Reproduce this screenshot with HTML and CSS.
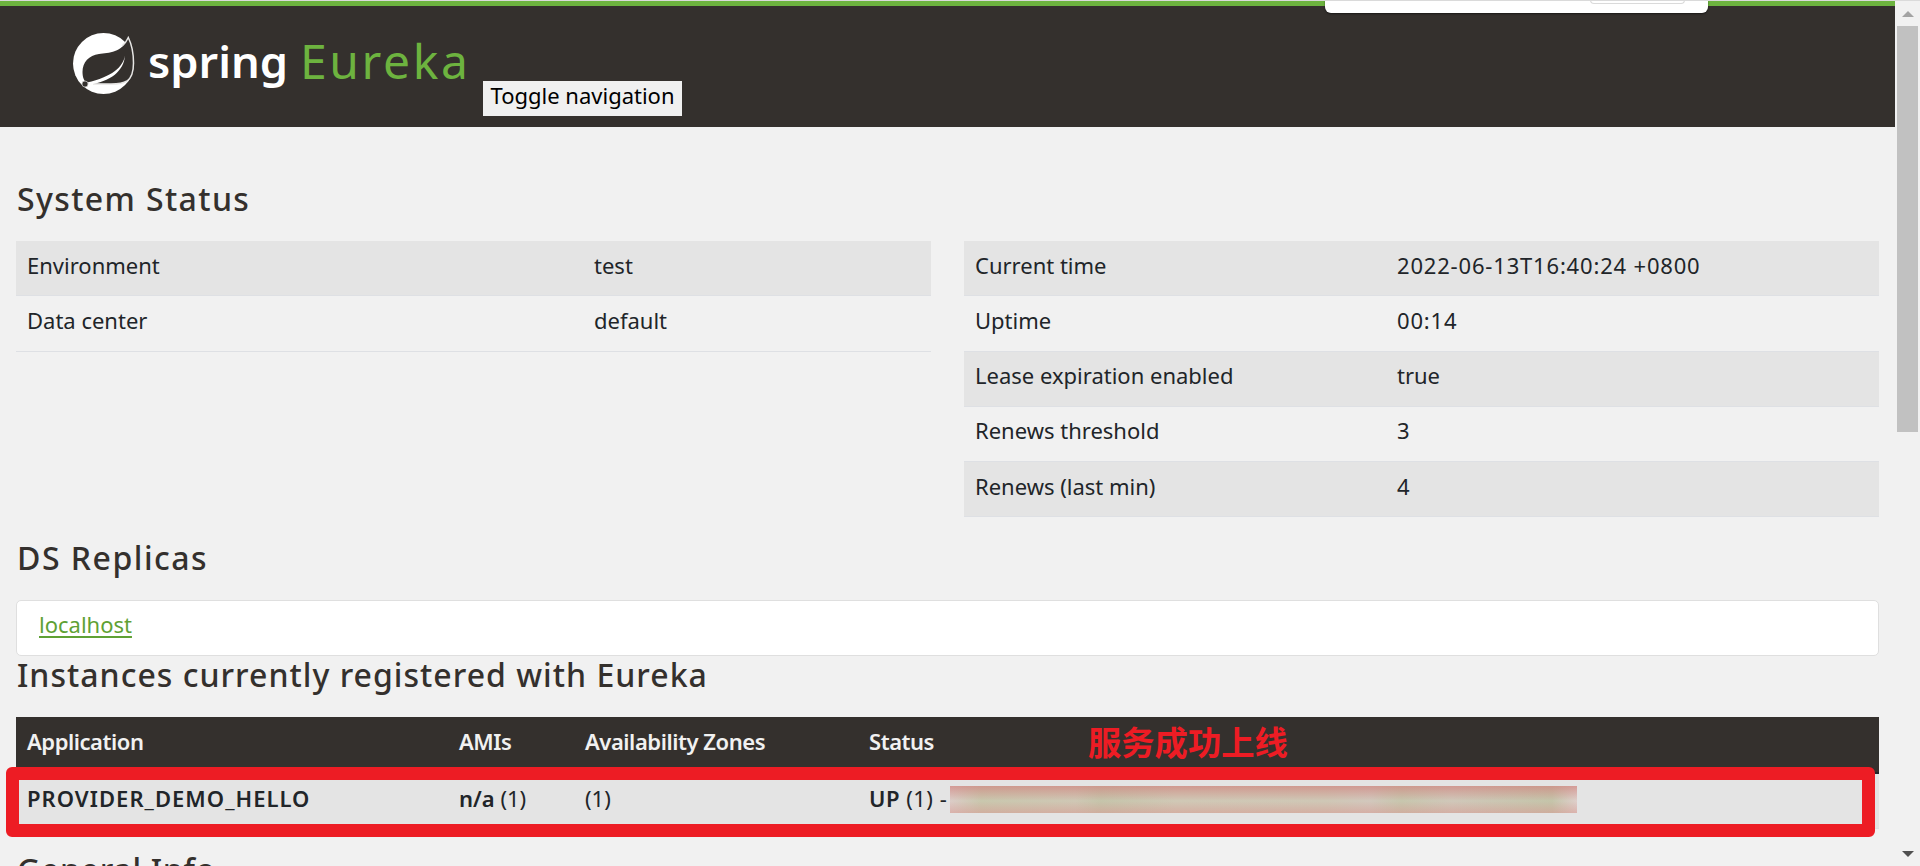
FILE: index.html
```html
<!DOCTYPE html>
<html lang="en">
<head>
<meta charset="utf-8">
<title>Eureka</title>
<link rel="stylesheet" href="styles.css">
</head>
<body>
<div class="window">
  <div class="page">
    <nav class="navbar">
      <svg class="logo" width="410" height="90" viewBox="0 -10 410 90" role="img" aria-label="spring Eureka">
        <circle cx="30.5" cy="30.5" r="30.5" fill="#fff"/>
        <path d="M55.3 4.5 C58.5 11 61 20 61 30 C61 38 59 45 54 48 C50 50.5 44 51 38 51 L15 50.5 C11 49 9.5 44 9.5 39 C9.5 29 16 22.5 26 21 C36 19.5 49 20 55.3 4.5Z" fill="#34302d"/>
        <path d="M49 13 C52 10.500 54 7.500 55.300 4.500 C58.500 11 60.500 20 60.500 30 C60.500 38 58.500 45 54 48 C50 50.500 44 51 38 51 L20 51" fill="none" stroke="#e6e5e4" stroke-width="1.500"/>
        <path d="M52 22.500 C50 34 39 44 14 49.500 L16 51.500 C37 49 51 38 52 22.500Z" fill="#fff"/>
        <circle cx="12" cy="51" r="3" fill="#34302d" stroke="#c4c3c2" stroke-width=".8"/>
        <text class="logo-spring" x="75" y="44.500" textLength="140" lengthAdjust="spacingAndGlyphs">spring</text>
        <text class="logo-eureka" x="227" y="45.500" textLength="168">Eureka</text>
      </svg>
      <button class="toggle" type="button">Toggle navigation</button>
    </nav>
    <main class="content">
      <h1 class="title title-status">System Status</h1>
      <div class="columns">
        <div class="table table-env">
          <div class="row odd"><span>Environment</span><span>test</span></div>
          <div class="row"><span>Data center</span><span>default</span></div>
        </div>
        <div class="table table-stats">
          <div class="row odd"><span>Current time</span><span class="digits">2022-06-13T16:40:24 +0800</span></div>
          <div class="row"><span>Uptime</span><span class="digits">00:14</span></div>
          <div class="row odd"><span>Lease expiration enabled</span><span>true</span></div>
          <div class="row"><span>Renews threshold</span><span>3</span></div>
          <div class="row odd"><span>Renews (last min)</span><span>4</span></div>
        </div>
      </div>
      <h1 class="title title-replicas">DS Replicas</h1>
      <div class="list"><a class="link" href="#">localhost</a></div>
      <h1 class="title title-instances">Instances currently registered with Eureka</h1>
      <div class="instances">
        <div class="irow head"><span>Application</span><span>AMIs</span><span>Availability Zones</span><span class="status">Status<b class="note">服务成功上线</b></span></div>
        <div class="irow body"><b class="app">PROVIDER_DEMO_HELLO</b><span><b>n/a</b> (1)</span><span>(1)</span><span class="status"><span class="up-count"><b>UP</b> (1) -</span><i class="smudge"></i></span></div>
        <div class="marker"></div>
      </div>
      <h1 class="title title-info">General Info</h1>
    </main>
  </div>
  <div class="scrollbar">
    <div class="arrow up"></div>
    <div class="thumb"></div>
    <div class="arrow down"></div>
  </div>
  <div class="popup"><div class="popup-button"></div></div>
</div>
</body>
</html>
```
FILE: styles.css
```css
* { box-sizing: border-box; }
body { margin: 0; overflow: hidden; background: #f1f1f1; }
.window {
  position: relative; display: grid; grid-template-columns: 1895px 25px;
  height: 866px; overflow: hidden; border-top: 1px solid #dadada;
  font: 22px/33px "Noto Sans", "Noto Sans CJK SC", sans-serif; color: #212529;
}
.page { height: 865px; overflow: hidden; }
.navbar {
  display: flex; height: 126px; padding: 17px 0 0 73px;
  background: #34302d; border-top: 5px solid #6db33f;
}
.logo { display: block; }
.logo-spring { font: 600 44px "Noto Sans", sans-serif; fill: #fff; }
.logo-eureka { font: 400 48px "Noto Sans", sans-serif; fill: #6db33f; }
.toggle {
  width: 199px; height: 35px; margin-top: 58px; padding: 0 0 6px; border: 0;
  background: #f0f0f0; color: #000; font: 22px/29px "Noto Sans", sans-serif; white-space: nowrap;
}
.content { padding: 0 16px; }
.title {
  margin: 0; padding-left: 1px; height: 40px; color: #34302d;
  font: 500 32px/40px "Noto Sans", sans-serif; white-space: nowrap;
}
.title-status { margin-top: 52px; letter-spacing: 1.38px; }
.columns { display: grid; grid-template-columns: 915px 915px; gap: 33px; margin-top: 22px; height: 277px; }
.row {
  display: grid; height: 55.25px; padding: 7.5px 11px 0; white-space: nowrap;
  border-bottom: 1px solid #dee0e4;
}
.odd { background: #e4e4e4; }
.digits { letter-spacing: .82px; }
.table-env .row { grid-template-columns: 567px 1fr; }
.table-stats .row { grid-template-columns: 422px 1fr; }
.title-replicas { margin-top: 20px; letter-spacing: 1.5px; }
.list {
  height: 56px; margin-top: 22px; padding: 7px 22px 0; background: #fff;
  border: 1px solid #dfdfdf; border-radius: 5px;
}
.link { color: #5fa134; text-underline-offset: 3px; text-decoration-thickness: 2px; }
.title-instances { margin-top: -1px; letter-spacing: 1.02px; }
.instances { position: relative; margin-top: 22px; font-size: 22px; }
.irow { display: grid; grid-template-columns: 432px 126px 284px 1fr; padding: 7.5px 11px 0; white-space: nowrap; }
.head { height: 57px; background: #34302d; color: #f1f1f1; font-weight: 600; letter-spacing: -.45px; border-bottom: 2px solid #212529; }
.body { height: 55px; background: #e4e4e4; border-bottom: 1px solid #dee0e4; }
.irow b { font-weight: 600; }
.irow .app { letter-spacing: 1.03px; }
.status { display: flex; }
.up-count { width: 78px; letter-spacing: .5px; }
.irow .note { margin-left: 154px; margin-top: -1px; font: 700 33.3px/33px "Noto Sans CJK SC", sans-serif; letter-spacing: 0; color: #ed1c24; }
.smudge {
  width: 627px; height: 27px; margin: 4.5px 0 0 3px;
  background:
    linear-gradient(180deg, rgba(208,128,124,.65), rgba(208,150,140,0) 55%, rgba(216,150,144,.5)),
    linear-gradient(90deg, #dccdc8, #c9c8ae 5%, #cfc8b5 20%, #c5c5ab 24%, #d0c9b6 36%, #cfc8b6 60%, #d2c8bd 67%, #c7c7ae 72%, #d0c8ba 80%, #c4c5aa 96%, #dfd0cc);
}
.marker {
  position: absolute; left: -10px; top: 50px; width: 1869px; height: 70px;
  border: 13px solid #ed1c24; border-radius: 6px;
}
.title-info { margin-top: 21px; letter-spacing: .7px; }
.scrollbar { display: flex; flex-direction: column; align-items: center; height: 865px; background: #f1f1f1; }
.thumb { width: 21px; height: 406px; margin-top: 9px; background: #c1c1c1; }
.arrow { width: 0; height: 0; border: 6px solid transparent; }
.up { margin-top: 10px; border-top: 0; border-bottom-color: #a3a3a3; }
.down { margin: auto 0 9px; border-bottom: 0; border-top-color: #505050; }
.popup {
  position: absolute; left: 1325px; top: -1px; width: 383px; height: 13px;
  background: #fff; border-radius: 0 0 6px 6px; box-shadow: 0 1px 2px rgba(0,0,0,.5);
}
.popup-button { width: 95px; height: 4px; margin-left: 265px; border: 1px solid #dadada; border-top: 0; border-radius: 0 0 6px 6px; }
```
